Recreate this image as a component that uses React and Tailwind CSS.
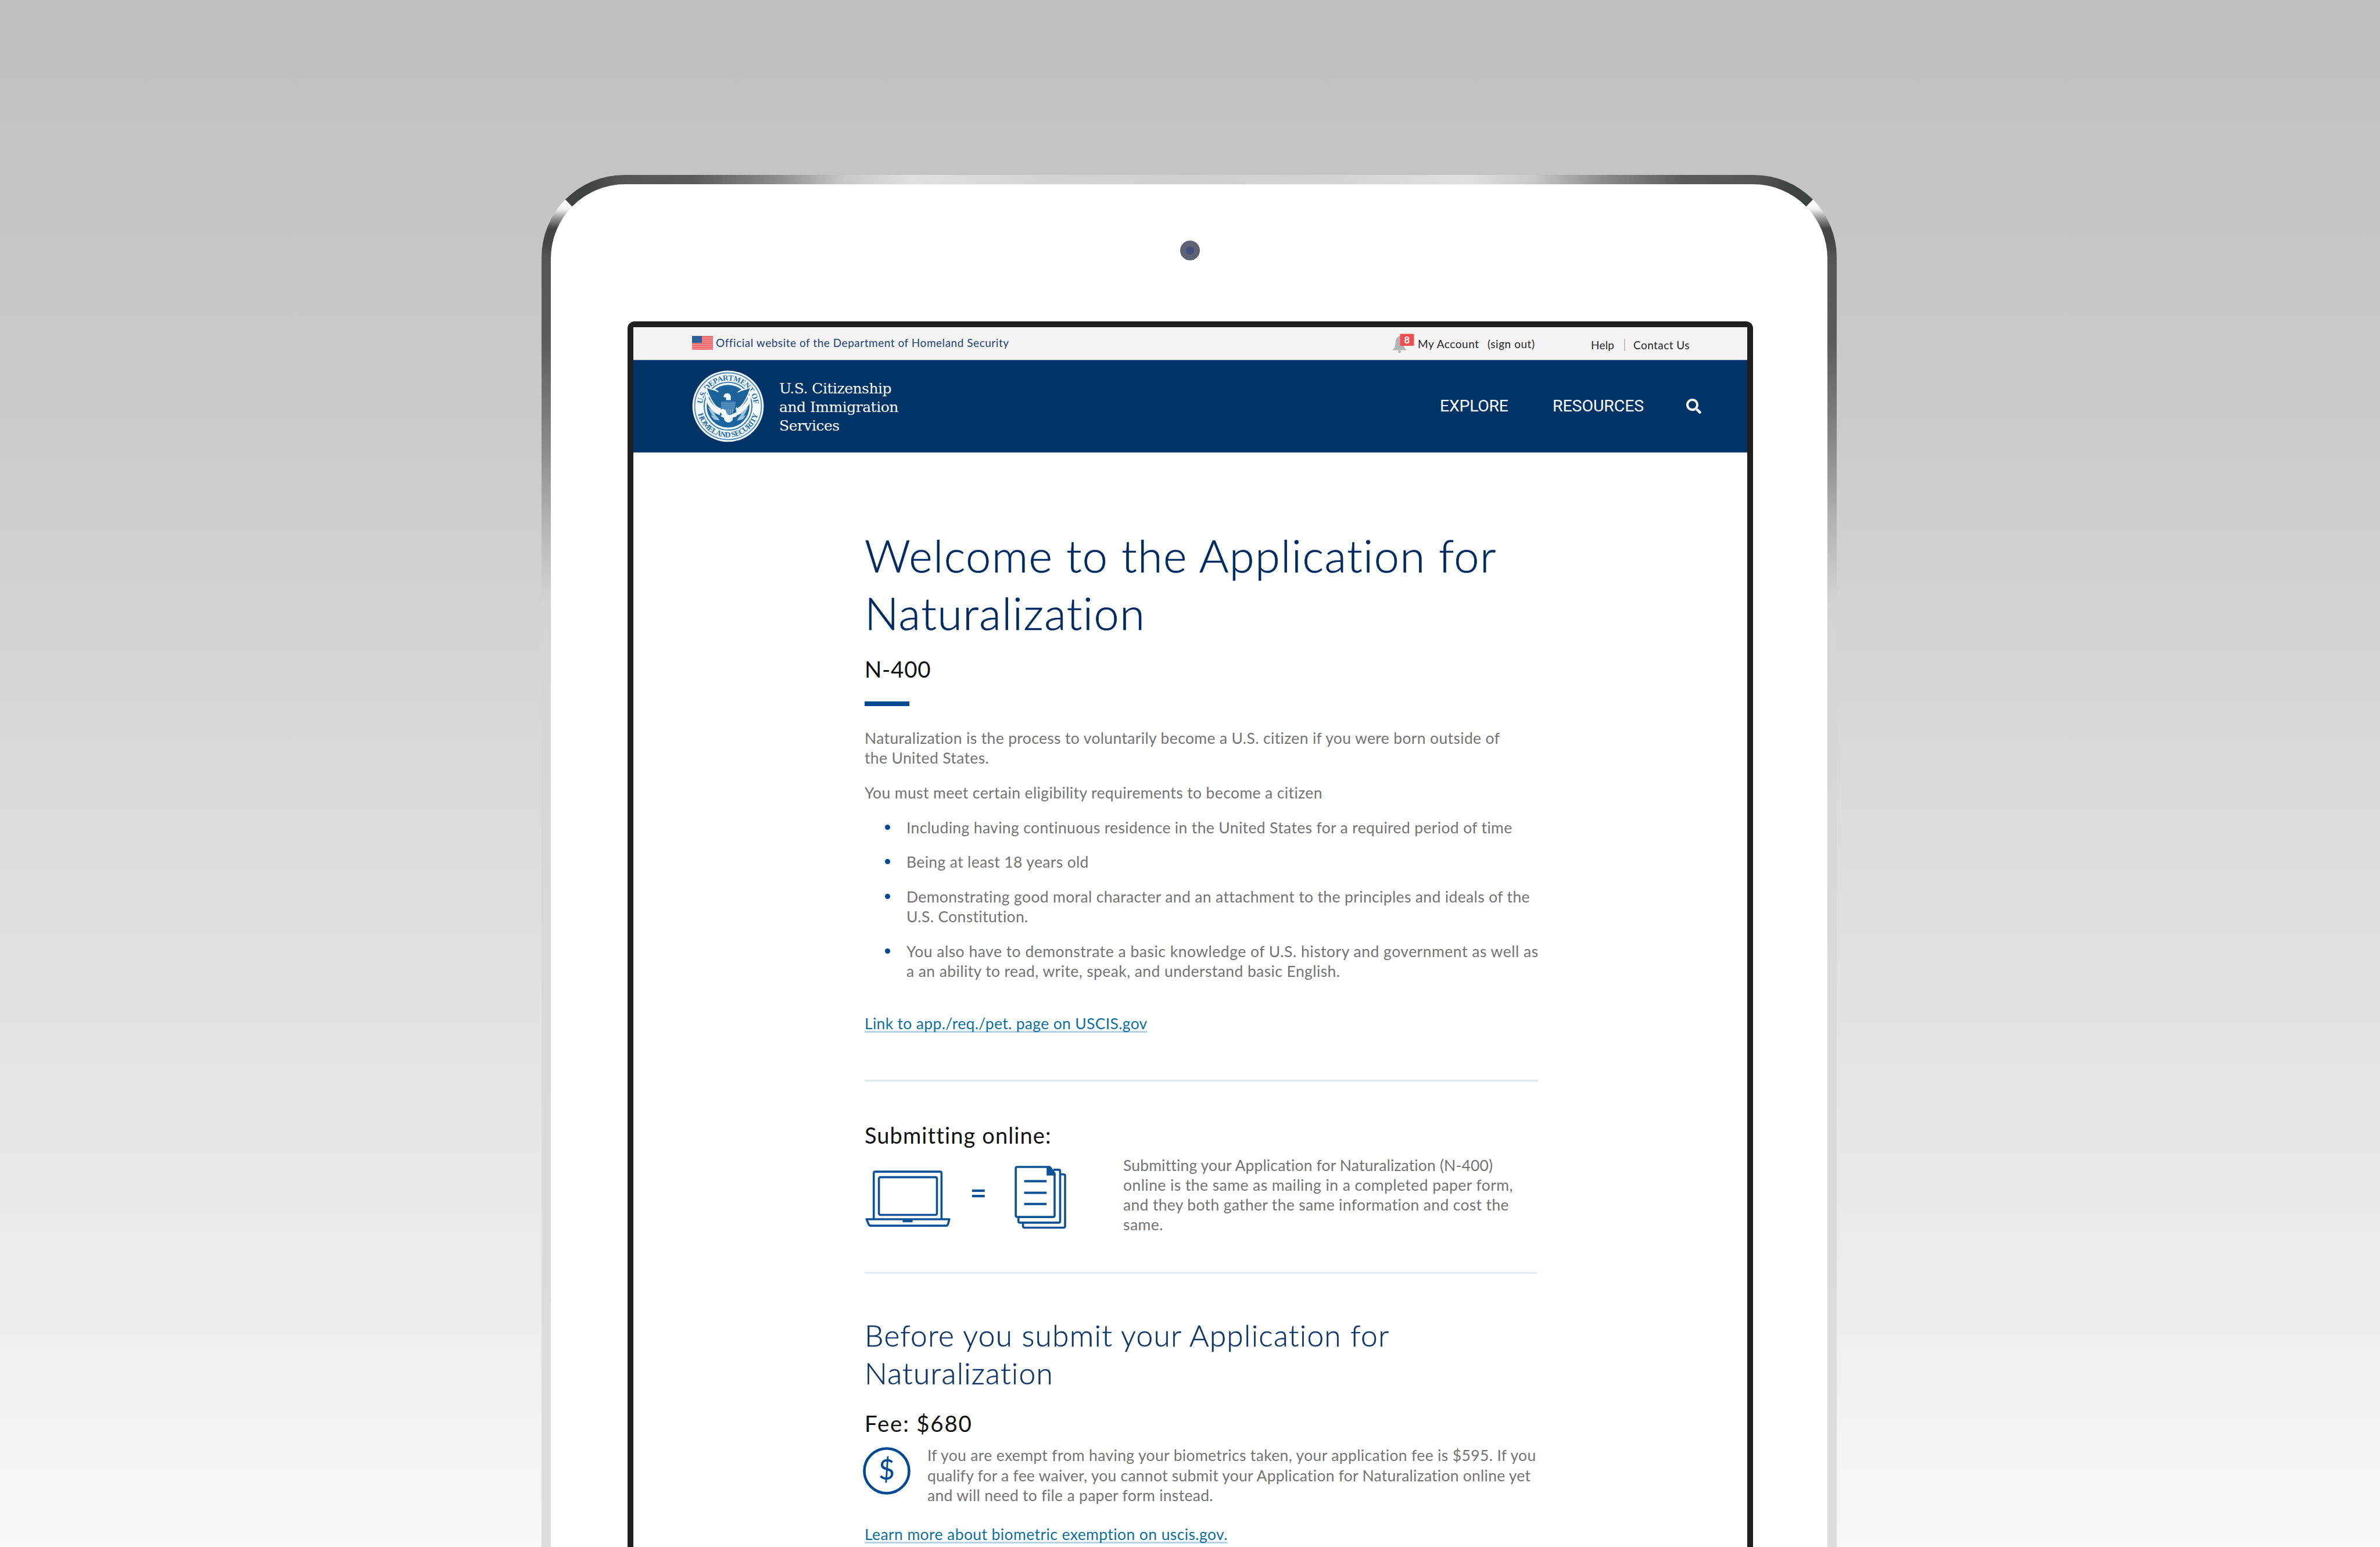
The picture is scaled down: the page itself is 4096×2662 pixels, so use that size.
import React from "react";
import { FaSearch } from "react-icons/fa";

function Flag() {
  return (
    <svg viewBox="0 0 36 24" className="w-[36px] h-[24px] shrink-0">
      <rect width="36" height="24" fill="#ee6c70" />
      {[3, 6.7, 10.4, 14.1, 17.8, 21.5].map((y) => (
        <rect key={y} y={y} width="36" height="1.1" fill="#f49a9d" />
      ))}
      <rect width="17" height="12" fill="#2c6096" />
    </svg>
  );
}

function Bell() {
  return (
    <svg viewBox="0 0 38 36" className="w-[38px] h-[36px] shrink-0">
      <path d="M0 28.5c4-3 5.2-6 5.6-13C6 9 9 5 12.500 4.500c4 .5 7 5 7.200 11 .4 7 1.600 10 5.300 13z" fill="#b1b3b5" />
      <circle cx="12.500" cy="31" r="2.400" fill="#b1b3b5" />
      <rect x="13.500" y="0.500" width="24" height="20.500" rx="1" fill="#f04c52" />
      <text x="25.500" y="16.500" textAnchor="middle" fontFamily="Lato, sans-serif" fontSize="17" fontWeight="700" fill="#fff">8</text>
    </svg>
  );
}

function Seal() {
  return (
    <svg viewBox="0 0 380 380" className="w-[124px] h-[124px] shrink-0">
      <defs>
        <path id="sealTop" d="M54 190a136 136 0 0 1 272 0" />
        <path id="sealBottom" d="M26 190a164 164 0 0 0 328 0" />
      </defs>
      <circle cx="190" cy="190" r="188" fill="#f4f9fd" />
      <circle cx="190" cy="190" r="176" fill="none" stroke="#4f8bbb" strokeWidth="6" />
      <circle cx="190" cy="190" r="126" fill="#f4f9fd" stroke="#2f78ad" strokeWidth="6" />
      <circle cx="190" cy="190" r="113" fill="#1a659f" />
      <text fontFamily="Liberation Serif, serif" fontWeight="700" fontSize="41" fill="#2a6fa8">
        <textPath href="#sealTop" startOffset="12" textLength="405" lengthAdjust="spacing">U.S. DEPARTMENT OF</textPath>
      </text>
      <text fontFamily="Liberation Serif, serif" fontWeight="700" fontSize="41" fill="#2a6fa8">
        <textPath href="#sealBottom" startOffset="42" textLength="430" lengthAdjust="spacing">HOMELAND SECURITY</textPath>
      </text>
      {/* wings */}
      <path d="M72 84c22 24 46 10 76 36l12 40-10 44c-34-8-58-56-78-120z" fill="#1d619a" stroke="#f4f9fd" strokeWidth="6" />
      <path d="M312 84c-22 24-46 10-76 36l-12 40 10 44c34-8 58-56 78-120z" fill="#1d619a" stroke="#f4f9fd" strokeWidth="6" />
      <path d="M76 112c8 36 30 78 76 96l-6 30c-44-16-68-56-74-94z" fill="#f4f9fd" />
      <path d="M308 112c-8 36-30 78-76 96l6 30c44-16 68-56 74-94z" fill="#f4f9fd" />
      {/* body, head and shield */}
      <path d="M140 104c30-22 70-22 100 0l6 66-20 40h-70l-22-40z" fill="#1d619a" />
      <path d="M168 134c2-16 34-18 36 2 2 8-2 14 2 22h-28c4-8 2-12 0-14l-12-2z" fill="#f4f9fd" />
      <path d="M150 162h82c2 44-12 66-41 78-29-12-43-34-41-78z" fill="#3f7fb1" stroke="#1a5c95" strokeWidth="4" />
      <path d="M153 176h76M153 186h75M154 196h73" stroke="#6b9fc7" strokeWidth="3" />
      <path d="M166 204v24M178 204v32M190 204v36M202 204v32M214 204v24" stroke="#88b3d4" strokeWidth="4" />
      {/* olive branch and arrows */}
      <path d="M84 196l28 20 16 28-22-6zM98 238l34 6 14 22-30-6z" fill="#9cc2de" />
      <path d="M296 196l-28 20-16 28 22-6zM284 238l-34 6-14 22 30-6z" fill="#9cc2de" />
      <path d="M150 222l-12-2 20-18 18 8 12 26-20 16-18-10 8-8zM232 222l14 2-14 22-24 4-10-12z" fill="#f4f9fd" />
      <path d="M166 236h52l-4 26c-10 18-34 18-44 0z" fill="#f4f9fd" />
    </svg>
  );
}

function LaptopEqualsPaper() {
  return (
    <svg viewBox="38 55 1070 340" className="block w-[350.600px] h-[111.400px]" fill="none" stroke="#0d5196" strokeWidth="11" strokeLinejoin="round">
      <path d="M86 340V100q0-8 8-8h340q8 0 8 8v240" />
      <rect x="113" y="121" width="305" height="198" rx="8" />
      <path d="M48 342h435l-7 26q-3 8-11 8H70q-8 0-11-8z" />
      <rect x="238" y="345" width="52" height="13" fill="#0d5196" stroke="none" />
      <path d="M602 192h67M602 220h67" strokeWidth="13" strokeLinejoin="miter" />
      <path d="M870 362v16q0 8 8 8h205q8 0 8-8V113q0-7-8-7h-16" />
      <path d="M846 332v20q0 8 8 8h204q7 0 7-8V90q0-8-7-8h-28" />
      <path d="M840 67h170l26 34v222q0 7-7 7H840q-8 0-8-7V74q0-7 8-7z" fill="#fff" />
      <path d="M994 64h18l26 34v14h-44z" fill="#0d5196" stroke="none" />
      <path d="M876 142h118M876 203h118M876 262h118" strokeWidth="12" />
    </svg>
  );
}

function Bullet({ children }) {
  return (
    <li className="flex">
      <span className="ml-[35px] mt-[12px] mr-[28px] size-[9px] shrink-0 rounded-full bg-[#004a94]" />
      <div>{children}</div>
    </li>
  );
}

export default function App() {
  return (
    <div className="flex w-[4096px] h-[2662px] overflow-hidden bg-[linear-gradient(180deg,#c0c0c0_0%,#c3c3c3_10%,#cbcbcb_28%,#dbdbdb_52%,#e9e9e9_78%,#f8f8f8_100%)] font-['Lato',sans-serif]">
      <div className="relative mt-[301px] ml-[932px] h-[2600px] w-[2229px] shrink-0 overflow-hidden rounded-t-[142px] bg-[linear-gradient(180deg,#fff_0px,#fff_50px,#ececec_60px,#999_74px,#454545_92px,#454545_116px,#565656_146px,#5c5c5c_290px,#888_460px,#b4b4b4_600px,#d4d4d4_740px,#d8d8d8_1200px,#dedede_2600px)] p-[16px]">
        <div className="absolute inset-x-0 top-0 h-[60px] bg-[linear-gradient(90deg,#3c3f3f_0px,#404343_80px,#555_140px,#5a5a5a_260px,#8a8a8a_400px,#c8c8c8_520px,#e0e0e0_640px,#d4d4d4_860px,#d0d0d0_1114px,#d4d4d4_1370px,#e0e0e0_1590px,#c8c8c8_1709px,#8a8a8a_1829px,#5a5a5a_1969px,#555_2089px,#404343_2149px,#3c3f3f_2229px)] [clip-path:polygon(0_0,100%_0,2171px_60px,58px_60px)]" />
        <div className="relative flex h-full flex-col rounded-t-[128px] bg-white">
          <div className="flex h-[236px] shrink-0 justify-center">
            <div className="mt-[97px] ml-[3px] flex size-[34px] items-center justify-center rounded-full bg-[#5d6374]">
              <div className="size-[14px] rounded-full bg-[#44507a]" />
            </div>
          </div>
          <div className="ml-[132px] flex w-[1937px] grow flex-col rounded-t-[12px] border-[10px] border-b-0 border-[#1f1f1f] bg-white">
            {/* utility bar */}
            <div className="flex h-[56px] shrink-0 items-start bg-[#f4f4f4] text-[19px] leading-[24px] text-[#262626]">
              <div className="mt-[15px] ml-[101px]"><Flag /></div>
              <div className="mt-[15px] ml-[5px] w-[1164px] whitespace-nowrap tracking-[0.530px] text-[#1c3f74]">Official website of the Department of Homeland Security</div>
              <div className="mt-[11px]"><Bell /></div>
              <div className="mt-[17px] ml-[6px] w-[120px] whitespace-nowrap tracking-[0.550px]">My Account</div>
              <div className="mt-[17px] w-[178px] whitespace-nowrap tracking-[0.550px]">(sign out)</div>
              <div className="mt-[18.500px] w-[57px] tracking-[0.200px]">Help</div>
              <div className="mt-[20px] mr-[14px] h-[21px] w-[2px] bg-[#c4c4c4]" />
              <div className="mt-[18.500px] whitespace-nowrap tracking-[0.450px]">Contact Us</div>
            </div>
            {/* brand bar */}
            <div className="flex h-[160px] shrink-0 items-center border-t border-b border-[#6d88a8] bg-[#003366] text-white">
              <div className="ml-[101px]"><Seal /></div>
              <div className="mt-[4px] ml-[26px] w-[1137px] font-['DejaVu_Serif',serif] text-[25px] leading-[32px] tracking-[-0.500px]">
                <div>U.S. Citizenship</div>
                <div>and Immigration</div>
                <div>Services</div>
              </div>
              <div className="w-[194px] font-['Roboto',sans-serif] text-[28.500px] leading-[32px] tracking-[-0.300px]">EXPLORE</div>
              <div className="w-[230px] font-['Roboto',sans-serif] text-[28.500px] leading-[32px] tracking-[-0.100px]">RESOURCES</div>
              <FaSearch className="size-[26px]" />
            </div>
            {/* page body */}
            <main className="mt-[127px] ml-[398px] w-[1159px] whitespace-nowrap text-[26.500px] leading-[34.400px] tracking-[0.350px] text-[#737373]">
              <h1 className="text-[77.500px] leading-[99px] font-light tracking-[1.450px] text-[#002b62] [-webkit-text-stroke:0.700px_#002b62]">
                Welcome to the Application for<br />Naturalization
              </h1>
              <h2 className="mt-[23px] text-[38.500px] leading-[48px] tracking-[0.700px] text-[#111]">N-400</h2>
              <div className="mt-[32px] h-[8px] w-[77px] bg-[#004a94]" />
              <p className="mt-[38px]">
                Naturalization is the process to voluntarily become a U.S. citizen if you were born outside of<br />the United States.
              </p>
              <p className="mt-[25px] tracking-[0.380px]">You must meet certain eligibility requirements to become a citizen</p>
              <ul className="mt-[25.500px] flex flex-col gap-[25.200px]">
                <Bullet>Including having continuous residence in the United States for a required period of time</Bullet>
                <Bullet>Being at least 18 years old</Bullet>
                <Bullet>Demonstrating good moral character and an attachment to the principles and ideals of the<br />U.S. Constitution.</Bullet>
                <Bullet><span className="tracking-[0.500px]">You also have to demonstrate a basic knowledge of U.S. history and government as well as</span><br /><span className="tracking-[0.400px]">a an ability to read, write, speak, and understand basic English.</span></Bullet>
              </ul>
              <div className="mt-[55.500px]">
                <a className="tracking-[0.320px] text-[#0b6fa0] underline decoration-[#b5d3e2] decoration-[2.500px] underline-offset-[3px] [text-decoration-skip-ink:none]">Link to app./req./pet. page on USCIS.gov</a>
              </div>
              <div className="mt-[79px] h-[3px] bg-[#dbe7ea]" />
              <div className="mt-[68px] flex">
                <div className="w-[445px]">
                  <h3 className="text-[38px] leading-[48px] tracking-[1.100px] text-[#111]">Submitting online:</h3>
                  <div className="mt-[27px]"><LaptopEqualsPaper /></div>
                </div>
                <p className="mt-[59px] leading-[34.200px] tracking-[0.430px]">
                  <span className="tracking-[0.150px]">Submitting your Application for Naturalization (N-400)</span><br />
                  online is the same as mailing in a completed paper form,<br />
                  <span className="tracking-[0.330px]">and they both gather the same information and cost the</span><br />
                  same.
                </p>
              </div>
              <div className="mt-[65px] h-[3px] w-[1157px] bg-[#e1ebf4]" />
              <h1 className="mt-[73px] text-[51.500px] leading-[64.500px] font-light tracking-[1.250px] text-[#0d3568] [-webkit-text-stroke:0.500px_#0d3568]">
                Before you submit your Application for<br />Naturalization
              </h1>
              <h2 className="mt-[31px] text-[38.500px] leading-[48px] tracking-[1.800px] text-[#111]">Fee: $680</h2>
              <div className="mt-[14px] flex">
                <svg viewBox="0 0 82 82" className="mt-[3px] -ml-[3px] mr-[29px] size-[82px] shrink-0">
                  <circle cx="41" cy="41" r="38.500" fill="none" stroke="#004a94" strokeWidth="4.600" />
                  <text x="41" y="55.500" textAnchor="middle" fontFamily="Lato, sans-serif" fontSize="48" letterSpacing="0" fill="#004a94">$</text>
                </svg>
                <p>
                  If you are exempt from having your biometrics taken, your application fee is $595. If you<br />
                  <span className="tracking-[0.240px]">qualify for a fee waiver, you cannot submit your Application for Naturalization online yet</span><br />
                  <span className="tracking-[0.300px]">and will need to file a paper form instead.</span>
                </p>
              </div>
              <div className="mt-[32px]">
                <a className="tracking-[0.400px] text-[#0b6fa0] underline decoration-[#b5d3e2] decoration-[2.500px] underline-offset-[3px] [text-decoration-skip-ink:none]">Learn more about biometric exemption on uscis.gov.</a>
              </div>
            </main>
          </div>
        </div>
      </div>
    </div>
  );
}
